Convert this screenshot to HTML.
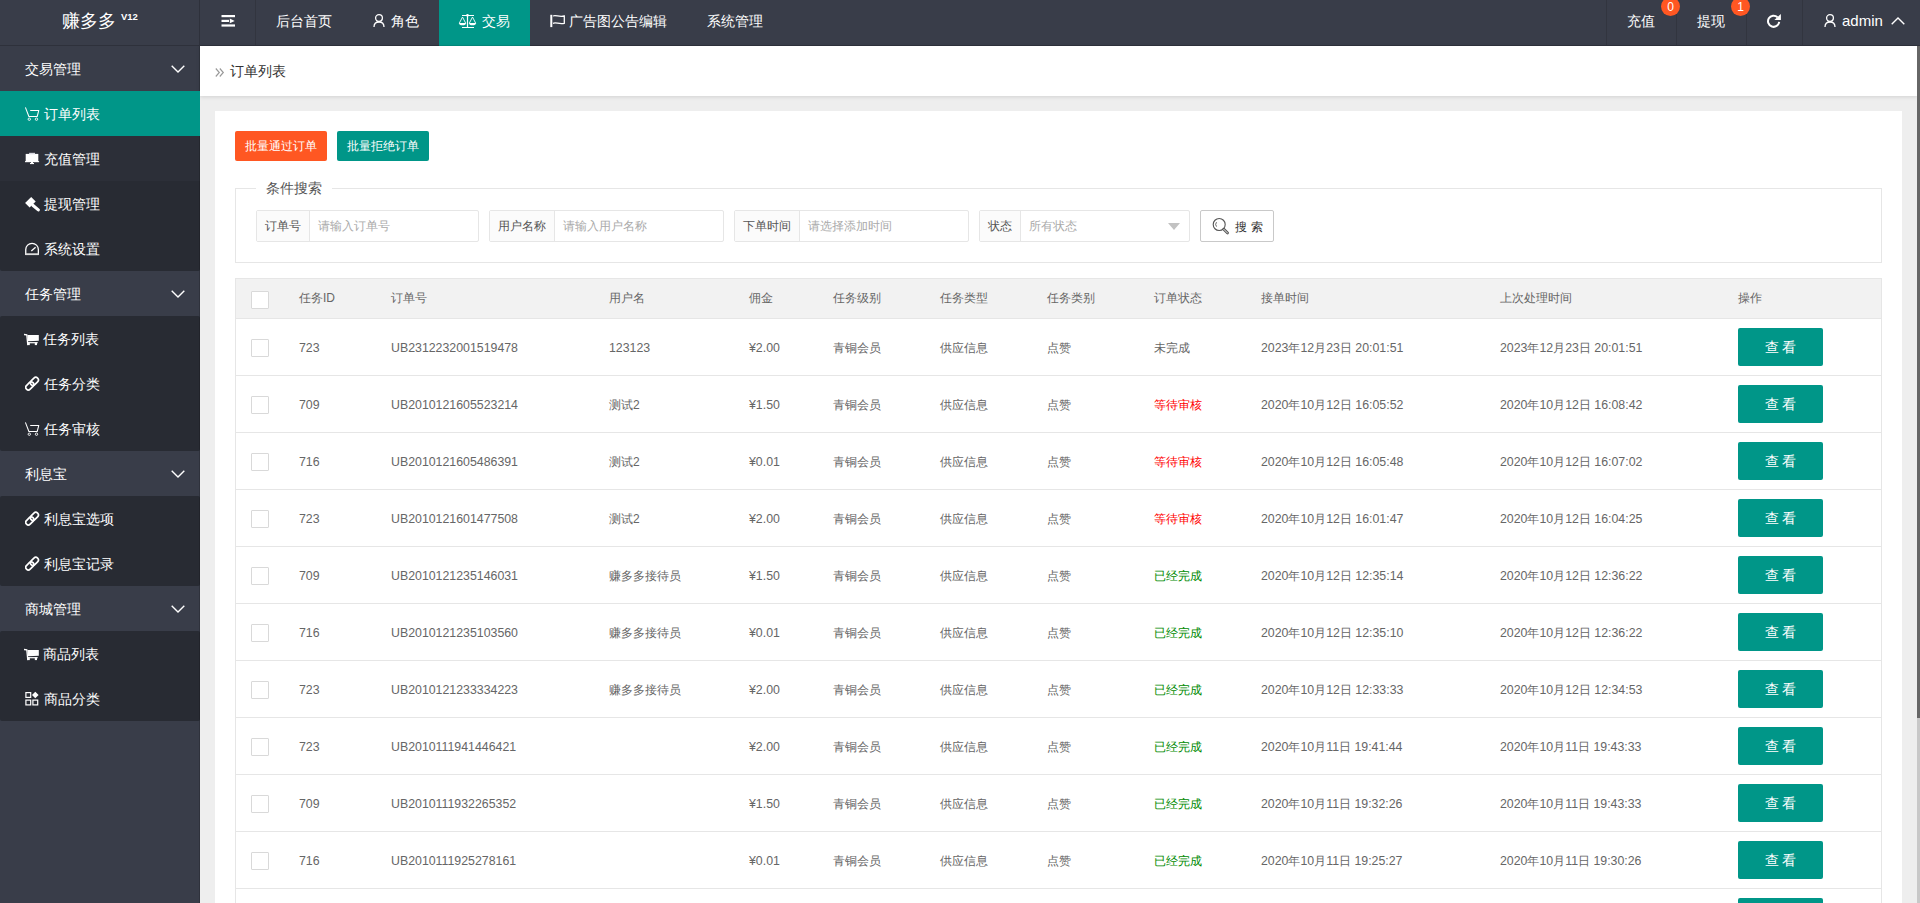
<!DOCTYPE html>
<html><head><meta charset="utf-8">
<style>
*{box-sizing:border-box;margin:0;padding:0}
html,body{width:1920px;height:903px;overflow:hidden;background:#eeeeee;font-family:"Liberation Sans",sans-serif;color:#666}
.abs{position:absolute}
#hdr{position:absolute;left:0;top:0;width:1920px;height:46px;background:#393D49;border-bottom:1px solid #2e313b}
.sep{position:absolute;top:0;width:1px;height:45px;background:#32353f}
.ht{position:absolute;color:#fff;font-size:14px;line-height:20px;top:11px;white-space:nowrap}
#side{position:absolute;left:0;top:46px;width:200px;height:857px;background:#393D49}
#sline{position:absolute;left:199px;top:0;width:1px;height:857px;background:rgba(0,0,0,.17);z-index:1}
.grp{position:absolute;left:0;width:200px;height:45px;color:#fff;font-size:14px}
.grp span{position:absolute;left:25px;top:13px;line-height:20px}
.grp svg{position:absolute;left:171px;top:19px}
.kids{position:absolute;left:0;width:200px;background:#282B33;border-radius:2px}
.it{position:relative;height:45px;color:#fff;font-size:14px}
.it.on{background:#009688;z-index:2}
.it span{position:absolute;left:44px;top:13px;line-height:20px}
.it svg{position:absolute;left:25px;top:15px}
#crumb{position:absolute;left:200px;top:46px;width:1717px;height:50px;background:#fff;box-shadow:0 1px 4px rgba(0,0,0,.12)}
#card{position:absolute;left:215px;top:111px;width:1687px;height:800px;background:#fff}
.btn{position:absolute;top:131px;height:30px;line-height:30px;padding:0 10px;font-size:12px;color:#fff;border-radius:2px;white-space:nowrap}
#fs{position:absolute;left:235px;top:188px;width:1647px;height:75px;border:1px solid #e6e6e6}
#legend{position:absolute;left:256px;top:178px;padding:0 10px;background:#fff;font-size:14px;line-height:20px;color:#555}
.grpi{position:absolute;top:210px;height:32px;border:1px solid #e6e6e6;border-radius:2px;background:#fff}
.lab{position:absolute;left:0;top:0;height:30px;background:#fbfbfb;border-right:1px solid #e6e6e6;font-size:12px;line-height:30px;padding:0 8px;color:#555;white-space:nowrap}
.ph{position:absolute;top:0;font-size:12px;line-height:30px;color:#aaa;white-space:nowrap}
#sbtn{position:absolute;left:1200px;top:210px;width:74px;height:32px;border:1px solid #c9c9c9;border-radius:2px;background:#fff}
#tbl{position:absolute;left:235px;top:278px;width:1647px;border:1px solid #e6e6e6;border-bottom:none}
.tr{position:relative;height:57px;border-bottom:1px solid #e6e6e6;background:#fff}
.tr.th{height:40px;background:#f2f2f2}
.c{position:absolute;top:1px;white-space:nowrap;font-size:12px;line-height:56px;color:#666}
.th .c{top:0}
.th .c{line-height:39px;color:#666}
.cb{position:absolute;left:15px;width:18px;height:18px;border:1px solid #d9d9d9;border-radius:1px;background:#fff}
.vbtn{position:absolute;left:1502px;top:9px;width:85px;height:38px;line-height:38px;background:#009688;color:#fff;border-radius:2px;font-size:14px;text-align:center}
.st1{color:#f00}
.n{font-size:12.35px;top:1px}
.st2{color:#008a00}
#scroll{position:absolute;left:1917px;top:46px;width:3px;height:857px;background:#c8c8c8}
#thumb{position:absolute;left:1917px;top:46px;width:3px;height:672px;background:#666}
</style></head><body>
<div id="hdr">
  <div class="abs" style="left:0;top:0;width:200px;height:45px;border-right:1px solid #2e313b"></div>
  <div class="ht" style="left:62px;top:10px;font-size:18px;line-height:22px">赚多多</div>
  <div class="ht" style="left:121px;top:12px;font-size:9.5px;line-height:10px;font-weight:bold">V12</div>
  <div class="sep" style="left:255px"></div>
  <svg class="abs" style="left:221px;top:14px" width="15" height="14" viewBox="0 0 15 14"><rect x="0.5" y="1" width="13.5" height="2.2" fill="#fff"/><rect x="0.5" y="5.8" width="7.5" height="2.2" fill="#fff"/><path d="M8.8 4.5 L13.7 6.9 L8.8 9.3Z" fill="#fff"/><rect x="0.5" y="10.4" width="13.5" height="2.2" fill="#fff"/></svg>
  <div class="ht" style="left:276px">后台首页</div>
  <svg class="abs" style="left:373px;top:13px" width="12" height="15" viewBox="0 0 12 15"><circle cx="6" cy="5.1" r="3.4" fill="none" stroke="#fff" stroke-width="1.3"/><path d="M1 14 C1 10.5 3 9 6 9 C9 9 11 10.5 11 14" fill="none" stroke="#fff" stroke-width="1.3"/></svg>
  <div class="ht" style="left:391px">角色</div>
  <div class="abs" style="left:439px;top:0;width:91px;height:46px;background:#009688;box-shadow:inset 0 -1px 0 rgba(0,0,0,.08)"></div>
  <svg class="abs" style="left:458px;top:13px" width="20" height="16" viewBox="0 0 20 16"><path d="M4 2.5 H16 M9.5 3 V14.5 M4 14.5 H16" stroke="#fff" stroke-width="1.2" fill="none"/><circle cx="9.5" cy="2.2" r="1.3" fill="#fff"/><path d="M4.5 4 L1.3 10.2 M4.5 4 L7.7 10.2 M14.5 4 L11.3 10.2 M14.5 4 L17.7 10.2" stroke="#fff" stroke-width="0.9" fill="none"/><path d="M1 10 H8 A3.5 2.3 0 0 1 1 10Z M11 10 H18 A3.5 2.3 0 0 1 11 10Z" fill="#fff"/></svg>
  <div class="ht" style="left:482px">交易</div>
  <svg class="abs" style="left:550px;top:14px" width="16" height="14" viewBox="0 0 16 14"><rect x="0.3" y="0.8" width="2" height="12.3" fill="#fff"/><path d="M3 2 C6 0.8 9 3.3 14.3 2 V9.3 C9 10.5 6 8 3 9.3" stroke="#fff" stroke-width="1.3" fill="none"/></svg>
  <div class="ht" style="left:569px">广告图公告编辑</div>
  <div class="ht" style="left:707px">系统管理</div>
  <div class="sep" style="left:1606px"></div>
  <div class="sep" style="left:1676px"></div>
  <div class="sep" style="left:1746px"></div>
  <div class="sep" style="left:1802px"></div>
  <div class="ht" style="left:1627px">充值</div>
  <div class="ht" style="left:1697px">提现</div>
  <div class="abs" style="left:1661px;top:-3px;width:19px;height:19px;border-radius:50%;background:#FF5722;color:#fff;font-size:12px;line-height:21px;text-align:center">0</div>
  <div class="abs" style="left:1731px;top:-3px;width:19px;height:19px;border-radius:50%;background:#FF5722;color:#fff;font-size:12px;line-height:21px;text-align:center">1</div>
  <svg class="abs" style="left:1766px;top:13px" width="16" height="16" viewBox="0 0 16 16"><path d="M13.2 8.8 A5.6 5.6 0 1 1 11.5 4.2" stroke="#fff" stroke-width="2" fill="none"/><path d="M8.4 6.9 H14.9 V0.9 Z" fill="#fff"/></svg>
  <svg class="abs" style="left:1824px;top:13px" width="12" height="15" viewBox="0 0 12 15"><circle cx="6" cy="5.1" r="3.4" fill="none" stroke="#fff" stroke-width="1.3"/><path d="M1 14 C1 10.5 3 9 6 9 C9 9 11 10.5 11 14" fill="none" stroke="#fff" stroke-width="1.3"/></svg>
  <div class="ht" style="left:1842px;font-size:15px">admin</div>
  <svg class="abs" style="left:1891px;top:17px" width="14" height="8" viewBox="0 0 14 8"><path d="M0.7 7.3 L7 1 L13.3 7.3" stroke="#fff" stroke-width="1.4" fill="none"/></svg>
</div>

<div id="side">
  <div class="grp" style="top:0"><span>交易管理</span><svg width="14" height="8" viewBox="0 0 14 8"><path d="M0.7 0.7 L7 7 L13.3 0.7" stroke="#fff" stroke-width="1.4" fill="none"/></svg></div>
  <div class="kids" style="top:45px">
    <div class="it on"><svg width="16" height="16" viewBox="0 0 16 16"><path d="M0.4 1.4 L3.9 10.5 H12.2 L13.8 4.4 H5.2" stroke="#fff" stroke-width="1.05" fill="none" stroke-linejoin="round"/><circle cx="4.3" cy="13.2" r="1.2" stroke="#fff" stroke-width="0.9" fill="none"/><circle cx="11.5" cy="13.2" r="1.2" stroke="#fff" stroke-width="0.9" fill="none"/></svg><span>订单列表</span></div>
    <div class="it" style="background:#2c2f38"><svg width="16" height="16" viewBox="0 0 16 16"><rect x="0.7" y="2.9" width="12.6" height="8.1" fill="#fff"/><rect x="4.1" y="1.8" width="5.9" height="1.5" fill="#d8d8e0"/><rect x="0" y="10.1" width="14.1" height="1.1" fill="#fff"/><rect x="6" y="11" width="2" height="1.2" fill="#fff"/><rect x="5" y="12" width="4" height="1.1" fill="#fff"/></svg><span>充值管理</span></div>
    <div class="it"><svg width="16" height="16" viewBox="0 0 16 16"><rect x="1.1" y="3.1" width="8.6" height="6.4" transform="rotate(-45 5.4 6.3)" fill="#fff"/><path d="M7.8 9.3 L13.3 13.9" stroke="#fff" stroke-width="3.1" stroke-linecap="round"/></svg><span>提现管理</span></div>
    <div class="it"><svg width="16" height="16" viewBox="0 0 16 16"><path d="M0.75 13.4 V8.6 A6.3 6.3 0 0 1 13.35 8.6 V13.4 Z" stroke="#fff" stroke-width="1.3" fill="none"/><rect x="0.4" y="12.4" width="13.4" height="1.7" fill="#ddd"/><path d="M6.3 10 L10.6 6.2" stroke="#fff" stroke-width="1.3"/></svg><span>系统设置</span></div>
  </div>
  <div class="grp" style="top:225px"><span>任务管理</span><svg width="14" height="8" viewBox="0 0 14 8"><path d="M0.7 0.7 L7 7 L13.3 0.7" stroke="#fff" stroke-width="1.4" fill="none"/></svg></div>
  <div class="kids" style="top:270px">
    <div class="it"><svg width="16" height="16" viewBox="0 0 16 16" style="left:24px"><path d="M0 3.5 L2.8 3.9 L3.8 14.1" stroke="#fff" stroke-width="1.3" fill="none"/><path d="M3.4 4.1 H14.8 V9.8 L3.9 10.3 Z" fill="#fff"/><rect x="3.7" y="11.1" width="10" height="1.2" fill="#fff"/><rect x="3.6" y="11.5" width="2.2" height="2.6" fill="#fff"/><rect x="10.8" y="11.5" width="2.2" height="2.6" fill="#fff"/></svg><span style="left:43px">任务列表</span></div>
    <div class="it"><svg width="16" height="16" viewBox="0 0 16 16"><rect x="4.75" y="2.75" width="9.2" height="5.2" rx="2.6" transform="rotate(-45 9.35 5.35)" stroke="#fff" stroke-width="1.7" fill="none"/><rect x="0.15" y="7.35" width="9.2" height="5.2" rx="2.6" transform="rotate(-45 4.75 9.95)" stroke="#fff" stroke-width="1.7" fill="none"/></svg><span>任务分类</span></div>
    <div class="it"><svg width="16" height="16" viewBox="0 0 16 16"><path d="M0.4 1.4 L3.9 10.5 H12.2 L13.8 4.4 H5.2" stroke="#fff" stroke-width="1.05" fill="none" stroke-linejoin="round"/><circle cx="4.3" cy="13.2" r="1.2" stroke="#fff" stroke-width="0.9" fill="none"/><circle cx="11.5" cy="13.2" r="1.2" stroke="#fff" stroke-width="0.9" fill="none"/></svg><span>任务审核</span></div>
  </div>
  <div class="grp" style="top:405px"><span>利息宝</span><svg width="14" height="8" viewBox="0 0 14 8"><path d="M0.7 0.7 L7 7 L13.3 0.7" stroke="#fff" stroke-width="1.4" fill="none"/></svg></div>
  <div class="kids" style="top:450px">
    <div class="it"><svg width="16" height="16" viewBox="0 0 16 16"><rect x="4.75" y="2.75" width="9.2" height="5.2" rx="2.6" transform="rotate(-45 9.35 5.35)" stroke="#fff" stroke-width="1.7" fill="none"/><rect x="0.15" y="7.35" width="9.2" height="5.2" rx="2.6" transform="rotate(-45 4.75 9.95)" stroke="#fff" stroke-width="1.7" fill="none"/></svg><span>利息宝选项</span></div>
    <div class="it"><svg width="16" height="16" viewBox="0 0 16 16"><rect x="4.75" y="2.75" width="9.2" height="5.2" rx="2.6" transform="rotate(-45 9.35 5.35)" stroke="#fff" stroke-width="1.7" fill="none"/><rect x="0.15" y="7.35" width="9.2" height="5.2" rx="2.6" transform="rotate(-45 4.75 9.95)" stroke="#fff" stroke-width="1.7" fill="none"/></svg><span>利息宝记录</span></div>
  </div>
  <div class="grp" style="top:540px"><span>商城管理</span><svg width="14" height="8" viewBox="0 0 14 8"><path d="M0.7 0.7 L7 7 L13.3 0.7" stroke="#fff" stroke-width="1.4" fill="none"/></svg></div>
  <div class="kids" style="top:585px">
    <div class="it"><svg width="16" height="16" viewBox="0 0 16 16" style="left:24px"><path d="M0 3.5 L2.8 3.9 L3.8 14.1" stroke="#fff" stroke-width="1.3" fill="none"/><path d="M3.4 4.1 H14.8 V9.8 L3.9 10.3 Z" fill="#fff"/><rect x="3.7" y="11.1" width="10" height="1.2" fill="#fff"/><rect x="3.6" y="11.5" width="2.2" height="2.6" fill="#fff"/><rect x="10.8" y="11.5" width="2.2" height="2.6" fill="#fff"/></svg><span style="left:43px">商品列表</span></div>
    <div class="it"><svg width="16" height="16" viewBox="0 0 16 16"><rect x="0.9" y="1.6" width="4.8" height="4.8" stroke="#fff" stroke-width="1.2" fill="none"/><rect x="0.9" y="9.1" width="4.8" height="4.8" stroke="#fff" stroke-width="1.2" fill="none"/><rect x="7.9" y="9.1" width="4.8" height="4.8" stroke="#fff" stroke-width="1.2" fill="none"/><path d="M10.3 0.7 L13.6 4 L10.3 7.3 L7 4 Z" fill="#fff"/></svg><span>商品分类</span></div>
  </div>
  <div id="sline"></div>
</div>

<div id="crumb">
  <svg class="abs" style="left:15px;top:22px" width="10" height="9" viewBox="0 0 10 9"><path d="M0.8 0.5 L4.3 4.5 L0.8 8.5 M4.8 0.5 L8.3 4.5 L4.8 8.5" stroke="#999" stroke-width="1.15" fill="none"/></svg>
  <div class="abs" style="left:30px;top:15px;font-size:14px;line-height:20px;color:#333">订单列表</div>
</div>

<div id="card"></div>
<div class="btn" style="left:235px;background:#FF5722">批量通过订单</div>
<div class="btn" style="left:337px;background:#009688">批量拒绝订单</div>

<div id="fs"></div>
<div id="legend">条件搜索</div>

<div class="grpi" style="left:256px;width:223px"><div class="lab">订单号</div><div class="ph" style="left:61px">请输入订单号</div></div>
<div class="grpi" style="left:489px;width:235px"><div class="lab">用户名称</div><div class="ph" style="left:73px">请输入用户名称</div></div>
<div class="grpi" style="left:734px;width:235px"><div class="lab">下单时间</div><div class="ph" style="left:73px">请选择添加时间</div></div>
<div class="grpi" style="left:979px;width:211px"><div class="lab">状态</div><div class="ph" style="left:49px">所有状态</div>
  <svg class="abs" style="left:188px;top:12px" width="12" height="7" viewBox="0 0 12 7"><path d="M0 0 H12 L6 7Z" fill="#c2c2c2"/></svg></div>
<div id="sbtn">
  <svg class="abs" style="left:10px;top:5px" width="20" height="20" viewBox="0 0 20 20"><circle cx="8.2" cy="8.5" r="6" stroke="#555" stroke-width="1.1" fill="none"/><path d="M12.8 13.3 L16.6 17.1" stroke="#555" stroke-width="2.8" stroke-linecap="round"/><path d="M12.8 13.3 L16.6 17.1" stroke="#fff" stroke-width="0.9" stroke-linecap="round"/><path d="M5.5 6.2 A3.5 3.5 0 0 0 5.5 10.6" stroke="#555" stroke-width="0.9" fill="none"/></svg>
  <div class="abs" style="left:34px;top:1px;line-height:30px;font-size:12px;color:#333;letter-spacing:4px;white-space:nowrap">搜索</div>
</div>

<div id="tbl">
  <div class="tr th">
    <i class="cb" style="top:12px"></i>
    <div class="c" style="left:63px">任务ID</div>
    <div class="c" style="left:155px">订单号</div>
    <div class="c" style="left:373px">用户名</div>
    <div class="c" style="left:513px">佣金</div>
    <div class="c" style="left:597px">任务级别</div>
    <div class="c" style="left:704px">任务类型</div>
    <div class="c" style="left:811px">任务类别</div>
    <div class="c" style="left:918px">订单状态</div>
    <div class="c" style="left:1025px">接单时间</div>
    <div class="c" style="left:1264px">上次处理时间</div>
    <div class="c" style="left:1502px">操作</div>
  </div>
<div class="tr"><i class="cb" style="top:20px"></i><div class="c n" style="left:63px">723</div><div class="c n" style="left:155px">UB2312232001519478</div><div class="c n" style="left:373px">123123</div><div class="c n" style="left:513px">¥2.00</div><div class="c" style="left:597px">青铜会员</div><div class="c" style="left:704px">供应信息</div><div class="c" style="left:811px">点赞</div><div class="c st0" style="left:918px">未完成</div><div class="c n" style="left:1025px">2023年12月23日 20:01:51</div><div class="c n" style="left:1264px">2023年12月23日 20:01:51</div><div class="vbtn">查 看</div></div>
<div class="tr"><i class="cb" style="top:20px"></i><div class="c n" style="left:63px">709</div><div class="c n" style="left:155px">UB2010121605523214</div><div class="c" style="left:373px">测试2</div><div class="c n" style="left:513px">¥1.50</div><div class="c" style="left:597px">青铜会员</div><div class="c" style="left:704px">供应信息</div><div class="c" style="left:811px">点赞</div><div class="c st1" style="left:918px">等待审核</div><div class="c n" style="left:1025px">2020年10月12日 16:05:52</div><div class="c n" style="left:1264px">2020年10月12日 16:08:42</div><div class="vbtn">查 看</div></div>
<div class="tr"><i class="cb" style="top:20px"></i><div class="c n" style="left:63px">716</div><div class="c n" style="left:155px">UB2010121605486391</div><div class="c" style="left:373px">测试2</div><div class="c n" style="left:513px">¥0.01</div><div class="c" style="left:597px">青铜会员</div><div class="c" style="left:704px">供应信息</div><div class="c" style="left:811px">点赞</div><div class="c st1" style="left:918px">等待审核</div><div class="c n" style="left:1025px">2020年10月12日 16:05:48</div><div class="c n" style="left:1264px">2020年10月12日 16:07:02</div><div class="vbtn">查 看</div></div>
<div class="tr"><i class="cb" style="top:20px"></i><div class="c n" style="left:63px">723</div><div class="c n" style="left:155px">UB2010121601477508</div><div class="c" style="left:373px">测试2</div><div class="c n" style="left:513px">¥2.00</div><div class="c" style="left:597px">青铜会员</div><div class="c" style="left:704px">供应信息</div><div class="c" style="left:811px">点赞</div><div class="c st1" style="left:918px">等待审核</div><div class="c n" style="left:1025px">2020年10月12日 16:01:47</div><div class="c n" style="left:1264px">2020年10月12日 16:04:25</div><div class="vbtn">查 看</div></div>
<div class="tr"><i class="cb" style="top:20px"></i><div class="c n" style="left:63px">709</div><div class="c n" style="left:155px">UB2010121235146031</div><div class="c" style="left:373px">赚多多接待员</div><div class="c n" style="left:513px">¥1.50</div><div class="c" style="left:597px">青铜会员</div><div class="c" style="left:704px">供应信息</div><div class="c" style="left:811px">点赞</div><div class="c st2" style="left:918px">已经完成</div><div class="c n" style="left:1025px">2020年10月12日 12:35:14</div><div class="c n" style="left:1264px">2020年10月12日 12:36:22</div><div class="vbtn">查 看</div></div>
<div class="tr"><i class="cb" style="top:20px"></i><div class="c n" style="left:63px">716</div><div class="c n" style="left:155px">UB2010121235103560</div><div class="c" style="left:373px">赚多多接待员</div><div class="c n" style="left:513px">¥0.01</div><div class="c" style="left:597px">青铜会员</div><div class="c" style="left:704px">供应信息</div><div class="c" style="left:811px">点赞</div><div class="c st2" style="left:918px">已经完成</div><div class="c n" style="left:1025px">2020年10月12日 12:35:10</div><div class="c n" style="left:1264px">2020年10月12日 12:36:22</div><div class="vbtn">查 看</div></div>
<div class="tr"><i class="cb" style="top:20px"></i><div class="c n" style="left:63px">723</div><div class="c n" style="left:155px">UB2010121233334223</div><div class="c" style="left:373px">赚多多接待员</div><div class="c n" style="left:513px">¥2.00</div><div class="c" style="left:597px">青铜会员</div><div class="c" style="left:704px">供应信息</div><div class="c" style="left:811px">点赞</div><div class="c st2" style="left:918px">已经完成</div><div class="c n" style="left:1025px">2020年10月12日 12:33:33</div><div class="c n" style="left:1264px">2020年10月12日 12:34:53</div><div class="vbtn">查 看</div></div>
<div class="tr"><i class="cb" style="top:20px"></i><div class="c n" style="left:63px">723</div><div class="c n" style="left:155px">UB2010111941446421</div><div class="c" style="left:373px"></div><div class="c n" style="left:513px">¥2.00</div><div class="c" style="left:597px">青铜会员</div><div class="c" style="left:704px">供应信息</div><div class="c" style="left:811px">点赞</div><div class="c st2" style="left:918px">已经完成</div><div class="c n" style="left:1025px">2020年10月11日 19:41:44</div><div class="c n" style="left:1264px">2020年10月11日 19:43:33</div><div class="vbtn">查 看</div></div>
<div class="tr"><i class="cb" style="top:20px"></i><div class="c n" style="left:63px">709</div><div class="c n" style="left:155px">UB2010111932265352</div><div class="c" style="left:373px"></div><div class="c n" style="left:513px">¥1.50</div><div class="c" style="left:597px">青铜会员</div><div class="c" style="left:704px">供应信息</div><div class="c" style="left:811px">点赞</div><div class="c st2" style="left:918px">已经完成</div><div class="c n" style="left:1025px">2020年10月11日 19:32:26</div><div class="c n" style="left:1264px">2020年10月11日 19:43:33</div><div class="vbtn">查 看</div></div>
<div class="tr"><i class="cb" style="top:20px"></i><div class="c n" style="left:63px">716</div><div class="c n" style="left:155px">UB2010111925278161</div><div class="c" style="left:373px"></div><div class="c n" style="left:513px">¥0.01</div><div class="c" style="left:597px">青铜会员</div><div class="c" style="left:704px">供应信息</div><div class="c" style="left:811px">点赞</div><div class="c st2" style="left:918px">已经完成</div><div class="c n" style="left:1025px">2020年10月11日 19:25:27</div><div class="c n" style="left:1264px">2020年10月11日 19:30:26</div><div class="vbtn">查 看</div></div>
<div class="tr"><i class="cb" style="top:20px"></i><div class="c n" style="left:63px">709</div><div class="c n" style="left:155px">UB2010111900000000</div><div class="c" style="left:373px"></div><div class="c n" style="left:513px">¥1.50</div><div class="c" style="left:597px">青铜会员</div><div class="c" style="left:704px">供应信息</div><div class="c" style="left:811px">点赞</div><div class="c st2" style="left:918px">已经完成</div><div class="c n" style="left:1025px">2020年10月11日 19:00:00</div><div class="c n" style="left:1264px">2020年10月11日 19:00:00</div><div class="vbtn">查 看</div></div>
</div>

<div id="scroll"></div><div id="thumb"></div>
</body></html>
